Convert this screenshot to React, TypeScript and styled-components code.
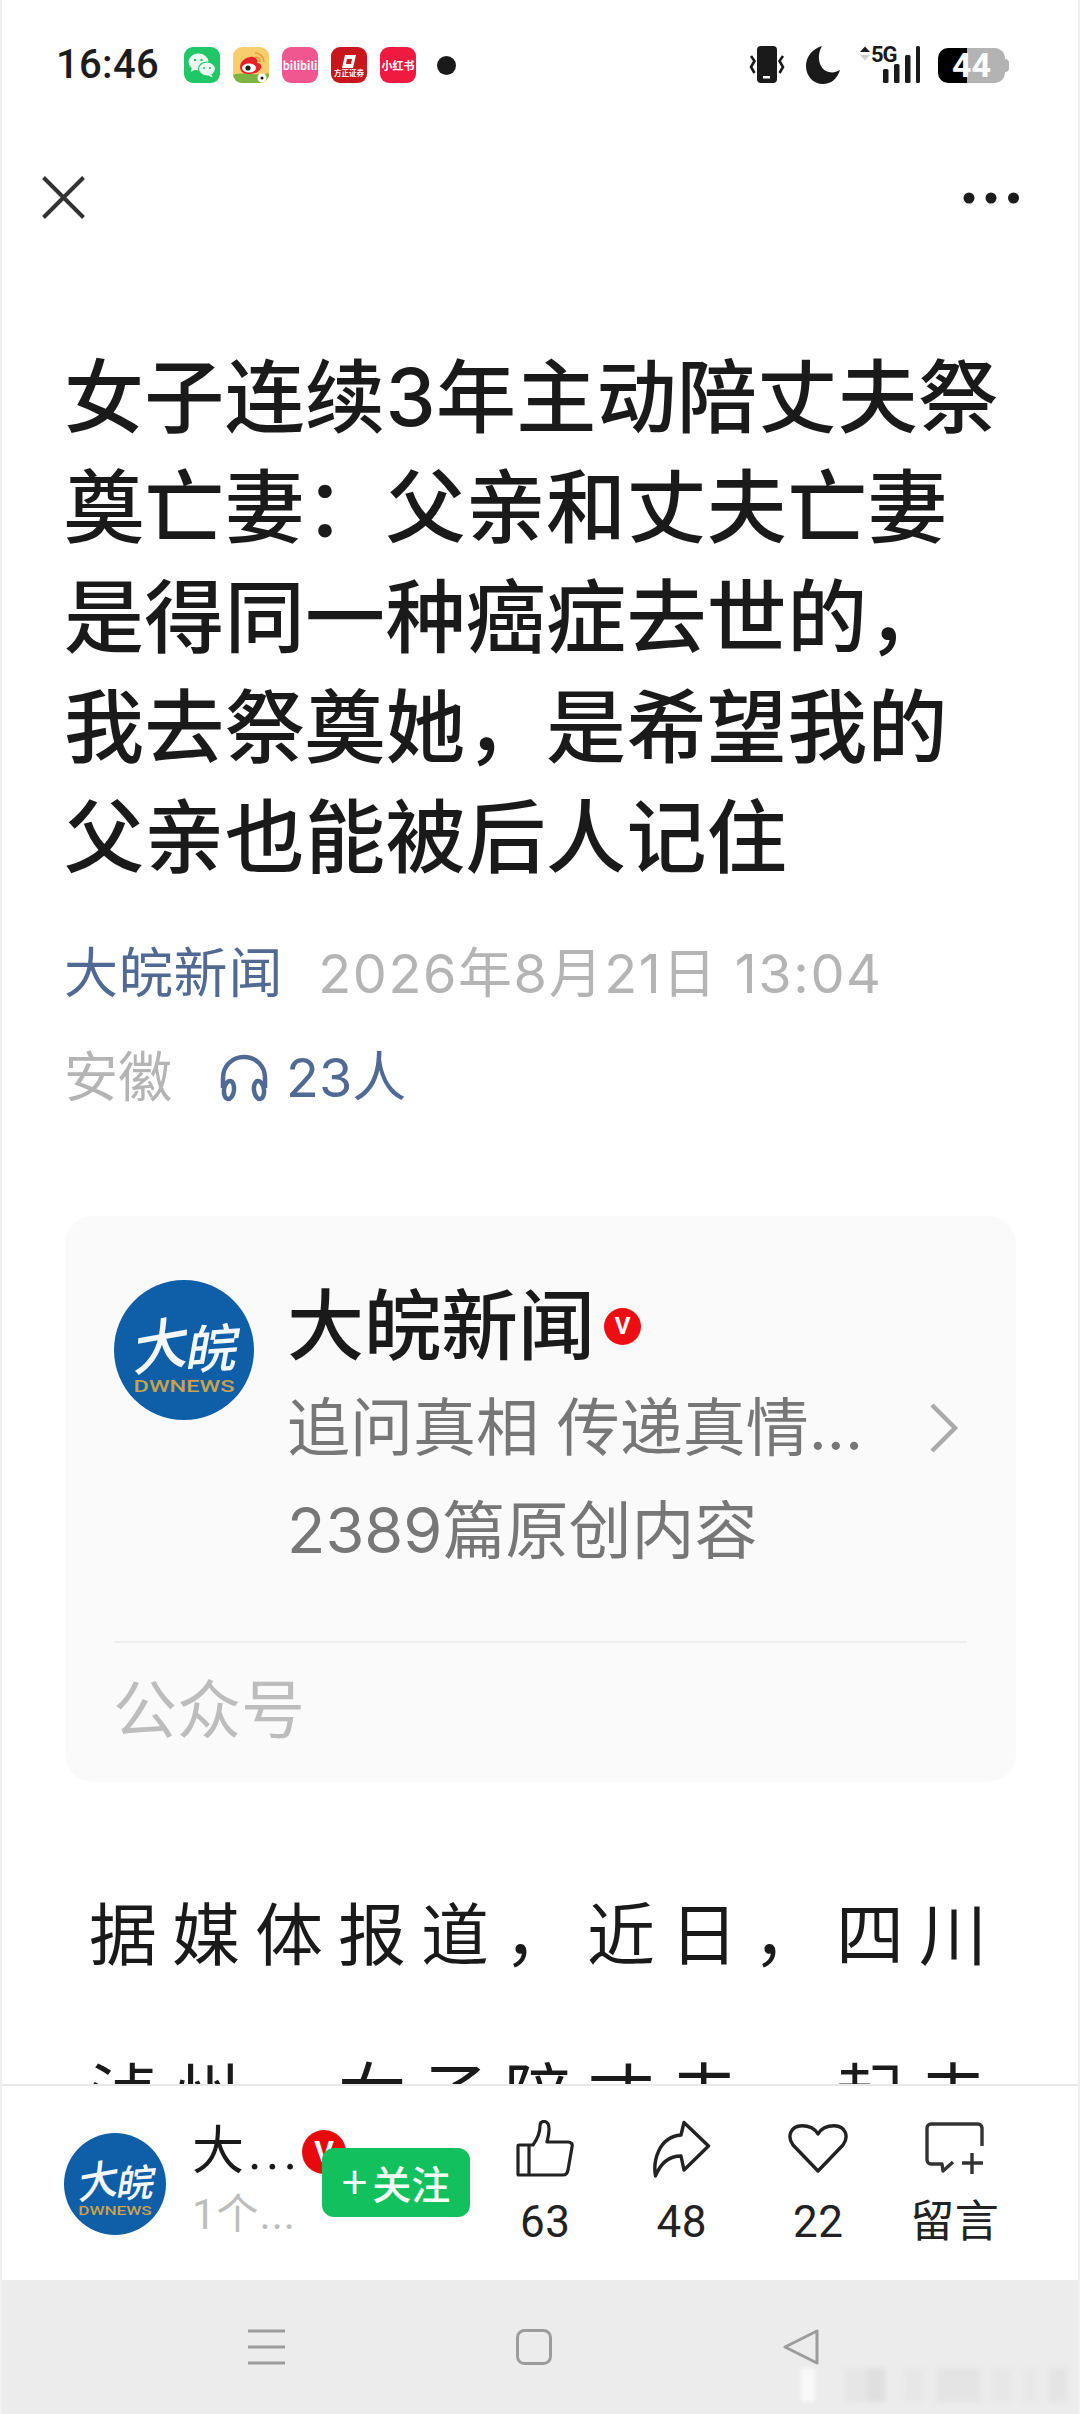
import React from "react";
import styled, { createGlobalStyle } from "styled-components";

const GlobalStyle = createGlobalStyle`
  html, body { margin: 0; padding: 0; background: #fff; }
  * { box-sizing: border-box; }
`;

const LATIN = `Inter, "Noto Sans CJK SC", sans-serif`;
const CJK = `"Noto Sans CJK SC", sans-serif`;

const Page = styled.div`
  position: relative;
  width: 1080px;
  height: 2414px;
  display: flex;
  flex-direction: column;
  overflow: hidden;
  background: #fff;
  border-left: 2px solid #f0f0f0;
  border-right: 2px solid #f0f0f0;
  font-family: ${LATIN};
`;

const Main = styled.main`
  flex: 1;
  min-height: 0;
  overflow: hidden;
  display: flex;
  flex-direction: column;
`;

const StatusBar = styled.header`
  display: flex;
  align-items: center;
  height: 38px;
  margin-top: 46px;
  padding: 0 73px 0 54px;
`;

const Clock = styled.span`
  font: 500 40px/38px Roboto, sans-serif;
  letter-spacing: 0.3px;
  color: #1c1c1c;
  width: 128px;
`;

const AppIcons = styled.div`
  display: flex;
  gap: 13px;
`;

const AppIcon = styled.div<{ $bg: string }>`
  width: 36px;
  height: 36px;
  border-radius: 9px;
  background: ${(p) => p.$bg};
  overflow: hidden;
  display: flex;
  flex-direction: column;
  align-items: center;
  justify-content: center;
  color: #fff;
  font-family: ${CJK};
  font-weight: 700;
`;

const AppLabel = styled.span<{ $size: number }>`
  font-size: ${(p) => p.$size}px;
  line-height: 1;
  white-space: nowrap;
`;

const NotifyDot = styled.span`
  width: 19px;
  height: 19px;
  margin-left: 21px;
  border-radius: 50%;
  background: #1a1a1a;
`;

const StatusRight = styled.div`
  margin-left: auto;
  display: flex;
  align-items: center;
`;

const Battery = styled.div`
  position: relative;
  width: 67px;
  height: 35px;
  margin-left: 18px;
  border-radius: 10px;
  background: linear-gradient(90deg, #000 0 43%, #b3b3b3 43% 100%);
  color: #fff;
  font: 700 34px/35px Roboto, sans-serif;
  text-align: center;
  &::after {
    content: "";
    position: absolute;
    right: -4px;
    top: 11px;
    width: 4px;
    height: 13px;
    border-radius: 0 4px 4px 0;
    background: #b3b3b3;
  }
`;

const TopBar = styled.nav`
  display: flex;
  align-items: center;
  justify-content: space-between;
  height: 43px;
  margin-top: 92px;
  padding: 0 59px 0 40px;
`;

const Title = styled.h1`
  margin: 123px 0 0;
  padding: 0 76px 0 62px;
  font-size: 80px;
  letter-spacing: 0.35px;
  line-height: 110px;
  font-weight: 500;
  color: #1a1a1a;
`;

const MetaRow = styled.div`
  display: flex;
  align-items: center;
  padding-left: 62px;
  height: 104px;
  font-size: 54px;
  line-height: 104px;
  white-space: nowrap;
`;

const MetaBlock = styled.div`
  margin-top: 30px;
`;

const Source = styled.span<{ $gap?: number; $offset?: number; $track?: number }>`
  color: #506a94;
  font-weight: 400;
  letter-spacing: ${(p) => p.$track ?? 0}px;
  margin-right: ${(p) => p.$gap ?? 0}px;
  margin-left: ${(p) => p.$offset ?? 0}px;
`;

const Muted = styled.span<{ $gap?: number; $track?: number }>`
  color: #b4b4b4;
  margin-right: ${(p) => p.$gap ?? 0}px;
  letter-spacing: ${(p) => p.$track ?? 0}px;
`;

const Card = styled.section`
  margin: 86px 62px 0 63px;
  height: 566px;
  flex: none;
  padding: 60px 49px 0 49px;
  border-radius: 28px;
  background: #fafafa;
`;

const CardHead = styled.div`
  display: flex;
  gap: 33px;
`;

const CardAvatar = styled.div`
  width: 140px;
  height: 140px;
  flex: none;
  margin-top: 4px;
`;

const CardInfo = styled.div`
  flex: 1;
  min-width: 0;
`;

const CardName = styled.div`
  display: flex;
  align-items: center;
  gap: 9px;
  height: 100px;
  font-size: 77px;
  line-height: 100px;
  font-weight: 500;
  color: #1a1a1a;
`;

const VBadge = styled.span`
  width: 37px;
  height: 37px;
  border-radius: 50%;
  background: #ee0d12;
  color: #fff;
  font: 700 24px/37px Roboto, sans-serif;
  text-align: center;
`;

const CardLine = styled.div`
  display: flex;
  align-items: center;
  justify-content: space-between;
  height: 103px;
  padding-right: 8px;
  font-size: 63px;
  line-height: 103px;
  color: #777;
  white-space: nowrap;
`;

const Divider = styled.hr`
  margin: 59px 0 0;
  border: 0;
  border-top: 2px solid #eeeeee;
`;

const CardFoot = styled.div`
  margin: 17px 0 0 -1px;
  font-size: 64px;
  line-height: 100px;
  color: #bdbdbd;
`;

const Body = styled.p`
  margin: 73px 0 0;
  padding: 0 70px 0 87px;
  font-size: 68px;
  letter-spacing: 15px;
  line-height: 160px;
  color: #1a1a1a;
`;

const BottomBar = styled.footer`
  position: relative;
  flex: none;
  height: 196px;
  display: flex;
  align-items: flex-start;
  padding: 47px 0 0 62px;
  background: #fff;
  border-top: 2px solid #e9e9e9;
`;

const BarAvatar = styled.div`
  width: 102px;
  height: 102px;
  flex: none;
`;

const Author = styled.div`
  position: relative;
  width: 129px;
  margin-left: 26px;
  margin-top: -12px;
  flex: none;
`;

const AuthorName = styled.div`
  font: 400 52px/62px Roboto, "Noto Sans CJK SC", sans-serif;
  letter-spacing: 4px;
  color: #1a1a1a;
  white-space: nowrap;
`;

const AuthorSub = styled.div`
  margin-top: 4px;
  font: 400 42px/56px Roboto, "Noto Sans CJK SC", sans-serif;
  letter-spacing: 1px;
  color: #bdbdbd;
  white-space: nowrap;
`;

const BarBadge = styled.span`
  position: absolute;
  left: 110px;
  top: 9px;
  width: 44px;
  height: 44px;
  border-radius: 50%;
  background: #e8090d;
  color: #fff;
  font: 700 30px/44px Roboto, sans-serif;
  text-align: center;
`;

const FollowButton = styled.button`
  position: relative;
  flex: none;
  width: 148px;
  height: 69px;
  margin-top: 15px;
  margin-left: 1px;
  padding: 0 0 7px;
  border: 0;
  border-radius: 12px;
  background: #12c15e;
  color: #f4fff8;
  font: 500 39px/62px ${CJK};
`;

const PlusSign = styled.span`
  font-size: 46px;
  font-weight: 400;
  margin-right: 5px;
`;

const Actions = styled.div`
  flex: none;
  display: flex;
  margin-left: 7px;
  margin-top: -15px;
`;

const Action = styled.div`
  width: 136.5px;
  display: flex;
  flex-direction: column;
  align-items: center;
`;

const ActionIcon = styled.div`
  height: 62px;
  display: flex;
  align-items: center;
  justify-content: center;
`;

const ActionLabel = styled.span`
  margin-top: 15px;
  font: 400 44px/54px Roboto, "Noto Sans CJK SC", sans-serif;
  letter-spacing: 0.5px;
  color: #222;
  white-space: nowrap;
`;

const NavBar = styled.div`
  position: relative;
  flex: none;
  height: 134px;
  display: flex;
  align-items: flex-start;
  gap: 231px;
  padding: 49px 0 0 246px;
  background: #ececec;
`;

const Watermark = styled.div`
  position: absolute;
  right: 9px;
  bottom: 12px;
  width: 268px;
  height: 34px;
  filter: blur(2px);
  background:
    linear-gradient(90deg, #f8f8f8 0 14px, transparent 14px),
    linear-gradient(90deg, transparent 0 44px, #e6e6e6 44px 66px, #dfdfdf 66px 84px, transparent 84px 104px, #e7e7e7 104px 122px, transparent 122px 136px, #e4e4e4 136px 180px, transparent 180px 190px, #e7e7e7 190px 210px, transparent 210px 222px, #e8e8e8 222px 236px, transparent 236px 248px, #e4e4e4 248px 266px, transparent 266px);
`;

const Logo = ({ size }: { size: number }) => (
  <svg width={size} height={size} viewBox="0 0 100 100" aria-label="大皖">
    <circle cx="50" cy="50" r="50" fill="#0f5ea8" />
    <g fill="#f4f8fb" fontFamily={CJK} fontWeight="500" fontStyle="italic">
      <text x="11" y="62" fontSize="40" transform="rotate(-10 30 50)">大</text>
      <text x="49" y="63" fontSize="37" transform="rotate(-4 65 50)">皖</text>
    </g>
    <text x="50" y="80" textAnchor="middle" fontFamily="Roboto, sans-serif" fontWeight="500" fontSize="12" fill="#c9a24a" textLength="72" lengthAdjust="spacingAndGlyphs">DWNEWS</text>
  </svg>
);

const Weibo = () => (
  <svg width="36" height="36" viewBox="0 0 36 36">
    <path d="M0 28 C10 24 24 30 36 26 V36 H0 Z" fill="#7cb342" />
    <path d="M7 20 C7 13 16 9 20 10 C25 11 25 15 24 16 C28 16 29 19 28 21 C26 26 20 27 15 27 C10 27 7 24 7 20 Z" fill="#e6212a" />
    <ellipse cx="16" cy="21" rx="7" ry="4.5" fill="#fff" />
    <circle cx="15" cy="21" r="2.6" fill="#222" />
    <path d="M22 6 C27 6 31 10 31 15 M22 10 C25 10 27 12 27 15" stroke="#ef9a2a" strokeWidth="1.5" fill="none" />
    <circle cx="29" cy="31" r="4.5" fill="#fff" />
    <circle cx="29" cy="31" r="1.6" fill="#223" />
  </svg>
);

const WeChat = () => (
  <svg width="36" height="36" viewBox="0 0 36 36">
    <ellipse cx="14.5" cy="15" rx="10" ry="8.5" fill="#eefaf1" />
    <path d="M8 20 L7 25 L12 22 Z" fill="#eefaf1" />
    <ellipse cx="23" cy="22" rx="8.5" ry="7" fill="#eefaf1" stroke="#1fc766" strokeWidth="1.2" />
    <path d="M27 27 L29 30.5 L24 28.5 Z" fill="#eefaf1" />
    <circle cx="11" cy="13" r="1.2" fill="#1fc766" />
    <circle cx="17.5" cy="13" r="1.2" fill="#1fc766" />
    <circle cx="20" cy="21" r="1.1" fill="#1fc766" />
    <circle cx="26" cy="21" r="1.1" fill="#1fc766" />
  </svg>
);

const FounderMark = () => (
  <svg width="16" height="15" viewBox="0 0 16 15">
    <path d="M4 1 H15 L12 14 H1 Z" fill="#fff" />
    <path d="M6 5 H11 L10 10 H5 Z" fill="#c8161d" />
  </svg>
);

const Sig = styled.div`
  position: relative;
  width: 62px;
  height: 38px;
  margin-left: 18px;
`;

const SigLabel = styled.span`
  position: absolute;
  left: 13px;
  top: -2px;
  font: 700 22px/22px Roboto, sans-serif;
  letter-spacing: -1px;
  color: #1a1a1a;
`;

const Signal = () => (
  <Sig>
    <SigLabel>5G</SigLabel>
    <svg width="62" height="38" viewBox="0 0 62 38">
      <path d="M2 6 L7 0.5 L12 6 Z" fill="#1a1a1a" />
      <path d="M2 9 L7 14.5 L12 9 Z" fill="#cfcfcf" />
      <rect x="25" y="23" width="5.5" height="14" rx="1.5" fill="#1a1a1a" />
      <rect x="36" y="18" width="5.5" height="19" rx="1.5" fill="#1a1a1a" />
      <rect x="47" y="9" width="5.5" height="28" rx="1.5" fill="#1a1a1a" />
      <rect x="58" y="0" width="4" height="37" rx="1.5" fill="#1a1a1a" />
    </svg>
  </Sig>
);

const PhoneMoon = () => (
  <svg width="92" height="38" viewBox="0 0 92 38">
    <rect x="9" y="0" width="20" height="37" rx="4" fill="#1a1a1a" />
    <rect x="15" y="30" width="7" height="2.5" fill="#fff" />
    <path d="M3 10 L6.5 15 L3 21 L6.5 27 M35 10 L31.5 15 L35 21 L31.5 27" fill="none" stroke="#1a1a1a" strokeWidth="2.6" />
    <path d="M74 0 C64 3 58 11 58 20 C58 30 65 38 75 38 C83 38 89 33 92 24 C88 26 85 27 81 26 C71 24 68 10 74 0 Z" fill="#1a1a1a" />
  </svg>
);

export default function App() {
  return (
    <Page>
      <GlobalStyle />
      <Main>
        <StatusBar>
          <Clock>16:46</Clock>
          <AppIcons>
            <AppIcon $bg="#1fc766"><WeChat /></AppIcon>
            <AppIcon $bg="#f8cd6e"><Weibo /></AppIcon>
            <AppIcon $bg="#f0568f"><AppLabel $size={11}>bilibili</AppLabel></AppIcon>
            <AppIcon $bg="#c8161d"><FounderMark /><AppLabel $size={7.5}>方正证券</AppLabel></AppIcon>
            <AppIcon $bg="#f0193f"><AppLabel $size={11}>小红书</AppLabel></AppIcon>
          </AppIcons>
          <NotifyDot />
          <StatusRight>
            <PhoneMoon />
            <Signal />
            <Battery>44</Battery>
          </StatusRight>
        </StatusBar>

        <TopBar>
          <svg width="43" height="43" viewBox="0 0 43 43">
            <path d="M1.5 1.5 L41.5 41.5 M41.5 1.5 L1.5 41.5" stroke="#333" strokeWidth="4" />
          </svg>
          <svg width="56" height="12" viewBox="0 0 56 12">
            <circle cx="6" cy="6" r="5.5" fill="#1c1c1c" />
            <circle cx="28" cy="6" r="5.5" fill="#1c1c1c" />
            <circle cx="50.5" cy="6" r="5.5" fill="#1c1c1c" />
          </svg>
        </TopBar>

        <Title>女子连续3年主动陪丈夫祭奠亡妻：父亲和丈夫亡妻是得同一种癌症去世的，我去祭奠她，是希望我的父亲也能被后人记住</Title>

        <MetaBlock>
          <MetaRow>
            <Source $gap={35} $track={0.8}>大皖新闻</Source>
            <Muted $track={1.6}>2026年8月21日 13:04</Muted>
          </MetaRow>
          <MetaRow>
            <Muted $gap={47}>安徽</Muted>
            <svg width="50" height="48" viewBox="0 0 50 48" fill="none" stroke="#506a94" strokeWidth="4.5">
              <path d="M4 34 V24 C4 12 13 3 25 3 C37 3 46 12 46 24 V34" />
              <ellipse cx="10" cy="36" rx="5" ry="9" transform="rotate(8 10 36)" />
              <ellipse cx="40" cy="36" rx="5" ry="9" transform="rotate(-8 40 36)" />
            </svg>
            <Source $offset={17}>23人</Source>
          </MetaRow>
        </MetaBlock>

        <Card>
          <CardHead>
            <CardAvatar><Logo size={140} /></CardAvatar>
            <CardInfo>
              <CardName>大皖新闻<VBadge>V</VBadge></CardName>
              <CardLine>
                <span>追问真相 传递真情...</span>
                <svg width="30" height="50" viewBox="0 0 30 50" fill="none" stroke="#aaa" strokeWidth="4.5">
                  <path d="M3 2 L26 25 L3 48" />
                </svg>
              </CardLine>
              <CardLine>2389篇原创内容</CardLine>
            </CardInfo>
          </CardHead>
          <Divider />
          <CardFoot>公众号</CardFoot>
        </Card>

        <Body>据媒体报道，近日，四川泸州，女子陪丈夫一起去祭奠亡妻</Body>
      </Main>

      <BottomBar>
        <BarAvatar><Logo size={102} /></BarAvatar>
        <Author>
          <AuthorName>大...</AuthorName>
          <AuthorSub>1个...</AuthorSub>
          <BarBadge>V</BarBadge>
        </Author>
        <FollowButton><PlusSign>+</PlusSign>关注</FollowButton>
        <Actions>
          <Action>
            <ActionIcon>
              <svg width="58" height="58" viewBox="0 0 58 58" fill="none" stroke="#222" strokeWidth="3.2" strokeLinejoin="round">
                <path d="M2 26 a1 1 0 0 1 1-1 H17 C22 18 24 12 24 6 C24 2 26 1.5 28 1.5 C31 1.5 33 4 33 9 C33 14 32 18 31 22 H52 C55 22 57 24 56 27 L52 50 C51.5 53 50 55 47 55 H3 a1 1 0 0 1 -1-1 Z" />
                <path d="M13 25 V55" />
              </svg>
            </ActionIcon>
            <ActionLabel>63</ActionLabel>
          </Action>
          <Action>
            <ActionIcon>
              <svg width="58" height="58" viewBox="0 0 58 58" fill="none" stroke="#222" strokeWidth="3.4" strokeLinejoin="round">
                <path d="M31 2.5 L55.5 26 L31 50 L28 36 C17 36 8 42 2.5 56 C0 42 5 17 28 15 Z" />
              </svg>
            </ActionIcon>
            <ActionLabel>48</ActionLabel>
          </Action>
          <Action>
            <ActionIcon>
              <svg width="60" height="50" viewBox="0 0 60 50" fill="none" stroke="#222" strokeWidth="3.4" strokeLinejoin="round">
                <path d="M30 47 L5 21 C-1 13 2 2 14 1.8 C21 1.8 27 5 30 10 C33 5 39 1.8 46 1.8 C58 2 61 13 55 21 Z" />
              </svg>
            </ActionIcon>
            <ActionLabel>22</ActionLabel>
          </Action>
          <Action>
            <ActionIcon>
              <svg width="60" height="54" viewBox="0 0 60 54" fill="none" stroke="#333" strokeWidth="3.4" strokeLinejoin="round">
                <path d="M57 24 V6 a4 4 0 0 0-4-4 H6 a4 4 0 0 0-4 4 V38 a4 4 0 0 0 4 4 H17 L18 49 L28 40" />
                <path d="M47 31 V52 M37 41 H58" />
              </svg>
            </ActionIcon>
            <ActionLabel>留言</ActionLabel>
          </Action>
        </Actions>
      </BottomBar>

      <NavBar>
        <svg width="37" height="36" viewBox="0 0 37 36" stroke="#9c9c9c" strokeWidth="3">
          <path d="M0 2 H37 M0 18 H37 M0 34 H37" />
        </svg>
        <svg width="36" height="36" viewBox="0 0 36 36" fill="none" stroke="#9c9c9c" strokeWidth="3">
          <rect x="1.5" y="1.5" width="33" height="33" rx="7" />
        </svg>
        <svg width="36" height="36" viewBox="0 0 36 36" fill="none" stroke="#9c9c9c" strokeWidth="3" strokeLinejoin="round">
          <path d="M34 2 V34 L2 18 Z" />
        </svg>
        <Watermark />
      </NavBar>
    </Page>
  );
}
